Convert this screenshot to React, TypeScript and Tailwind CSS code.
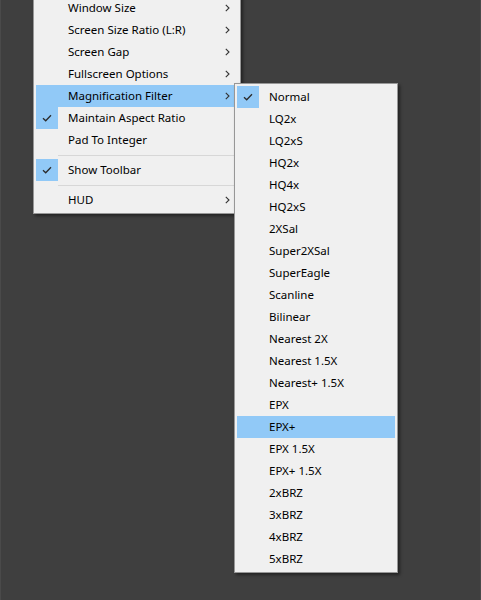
import React from "react";

type Item =
  | { kind: "item"; label: string; checked?: boolean; sub?: boolean; active?: boolean }
  | { kind: "sep" };

const mainItems: Item[] = [
  { kind: "item", label: "Window Size", sub: true },
  { kind: "item", label: "Screen Size Ratio (L:R)", sub: true },
  { kind: "item", label: "Screen Gap", sub: true },
  { kind: "item", label: "Fullscreen Options", sub: true },
  { kind: "item", label: "Magnification Filter", sub: true, active: true },
  { kind: "item", label: "Maintain Aspect Ratio", checked: true },
  { kind: "item", label: "Pad To Integer" },
  { kind: "sep" },
  { kind: "item", label: "Show Toolbar", checked: true },
  { kind: "sep" },
  { kind: "item", label: "HUD", sub: true },
];

const filters = [
  "Normal",
  "LQ2x",
  "LQ2xS",
  "HQ2x",
  "HQ4x",
  "HQ2xS",
  "2XSal",
  "Super2XSal",
  "SuperEagle",
  "Scanline",
  "Bilinear",
  "Nearest 2X",
  "Nearest 1.5X",
  "Nearest+ 1.5X",
  "EPX",
  "EPX+",
  "EPX 1.5X",
  "EPX+ 1.5X",
  "2xBRZ",
  "3xBRZ",
  "4xBRZ",
  "5xBRZ",
];

function Check() {
  return (
    <svg width="10" height="8" viewBox="0 0 10 8" fill="none">
      <path d="M1 4.2 L3.7 6.8 L9 1.2" stroke="#2b2b2b" strokeWidth="1.3" />
    </svg>
  );
}

function Chevron() {
  return (
    <svg width="5" height="8" viewBox="0 0 5 8" fill="none">
      <path d="M0.8 0.8 L4 4 L0.8 7.2" stroke="#333" strokeWidth="1.1" />
    </svg>
  );
}

function Row({ item }: { item: Extract<Item, { kind: "item" }> }) {
  return (
    <div
      className={`relative flex h-[22px] items-center pl-[32px] pr-[8px] ${
        item.active ? "bg-[#91c9f7]" : ""
      }`}
    >
      {item.checked && (
        <div className="absolute left-0 top-0 flex h-[22px] w-[22px] items-center justify-center bg-[#91c9f7]">
          <Check />
        </div>
      )}
      <span className="flex-1 whitespace-nowrap">{item.label}</span>
      {item.sub && <Chevron />}
    </div>
  );
}

export default function App() {
  return (
    <div
      className="relative h-[600px] w-[481px] overflow-hidden border-x border-[#4a4a4a] bg-[#3f3f3f] text-[11.5px] text-black"
      style={{ fontFamily: '"Noto Sans", "Open Sans", sans-serif' }}
    >
      <div className="absolute left-[32px] top-[-6px] w-[208px] border border-[#979797] bg-[#f0f0f0] p-[2px] shadow-[2px_2px_3px_rgba(0,0,0,0.45)]">
        {mainItems.map((item, i) =>
          item.kind === "sep" ? (
            <div key={i} className="flex h-[8px] items-center pl-[22px]">
              <div className="h-px w-full bg-[#d7d7d7]" />
            </div>
          ) : (
            <Row key={i} item={item} />
          ),
        )}
      </div>

      <div className="absolute left-[233px] top-[83px] w-[164px] border border-[#979797] bg-[#f0f0f0] p-[2px] shadow-[2px_2px_3px_rgba(0,0,0,0.45)]">
        {filters.map((f, i) => (
          <Row
            key={f}
            item={{ kind: "item", label: f, checked: i === 0, active: f === "EPX+" }}
          />
        ))}
      </div>
    </div>
  );
}
